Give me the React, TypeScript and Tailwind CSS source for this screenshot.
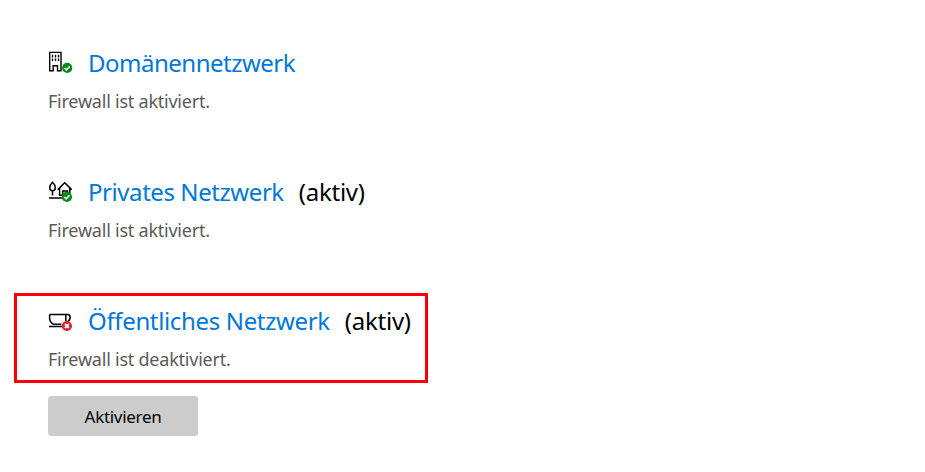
import type { ReactNode } from 'react';

function OkBadge({ x }: { x: number }) {
  return (
    <g transform={`translate(${x} 17.9)`}>
      <circle r="5.1" fill="#078b1c" stroke="none" />
      <path d="M-2.6 0.100l1.800 1.800 3.500-3.600" stroke="#fff" strokeWidth="1.600" />
    </g>
  );
}

function BuildingIcon() {
  return (
    <svg width="26" height="26" viewBox="0 0 26 26" fill="none" stroke="#000" strokeWidth="1.400">
      <path d="M1.700 20.700V2.400h11.300v18.300h-3.500v-5h-4.300v5z" />
      <path d="M4.500 4.800v2.600M7.500 4.800v2.600M10.500 4.800v2.600M4.500 8.500v2.600M7.500 8.500v2.600M10.500 8.500v2.600" />
      <OkBadge x={19.2} />
    </svg>
  );
}

function HomeIcon() {
  return (
    <svg width="26" height="26" viewBox="0 0 26 26" fill="none" stroke="#000" strokeWidth="1.500">
      <path d="M4.500 3.200C2.800 4.800 1.700 6.700 1.700 8.700a2.800 3 0 0 0 5.600 0c0-2-1.100-3.900-2.800-5.500zM4.500 11.700v4.800M1 18.900h14" />
      <path d="M9.700 10.600L16.700 3.800l7 6.800M11.600 9v7.300h3.100v-4.300h4.800v3M21.800 9v6" />
      <OkBadge x={18.9} />
    </svg>
  );
}

function CupIcon() {
  return (
    <svg width="26" height="26" viewBox="0 0 26 26" fill="none" stroke="#000" strokeWidth="1.500">
      <path d="M1.600 6.500h16.200v7M1.600 6.500v3.500c0 3 1.500 5 3.900 6.300h8M1 18.400h13" />
      <path d="M17.800 6.500h2c1.500 0 2.300 1 2.300 2.800 0 1.900-.8 3.300-2.300 3.900" />
      <circle cx="18.900" cy="18" r="5.100" fill="#d9202a" stroke="none" />
      <path d="M16.900 16l4 4M20.900 16l-4 4" stroke="#fff" strokeWidth="1.800" />
    </svg>
  );
}

type NetworkProps = {
  icon: ReactNode;
  name: string;
  nameClass: string;
  active?: boolean;
  status: string;
};

function Network({ icon, name, nameClass, active, status }: NetworkProps) {
  return (
    <section className="flex flex-col gap-[10px]">
      <h2 className="flex h-8 items-center text-[24px] leading-8 whitespace-nowrap">
        <span className="w-10 shrink-0">{icon}</span>
        <a className={`text-[#0078d7] ${nameClass}`}>{name}</a>
        {active && <span className="ml-[15px] tracking-[-0.25px] text-black">(aktiv)</span>}
      </h2>
      <p className="text-[18px] leading-6 tracking-[-0.23px] text-[#5a5a5a]">{status}</p>
    </section>
  );
}

export default function App() {
  return (
    <main className="h-[472px] w-full overflow-hidden bg-white pt-[47px] font-['Noto_Sans',sans-serif]">
      <div className="flex flex-col gap-[63px] pl-12">
        <Network icon={<BuildingIcon />} name="Domänennetzwerk" nameClass="tracking-[-0.5px]" status="Firewall ist aktiviert." />
        <Network icon={<HomeIcon />} name="Privates Netzwerk" nameClass="tracking-[-0.43px]" active status="Firewall ist aktiviert." />
      </div>
      <div className="mt-[51px] ml-[14px] h-[90px] w-[414px] border-3 border-[#fa0000] pt-[9px] pl-[31px]">
        <Network icon={<CupIcon />} name="Öffentliches Netzwerk" nameClass="tracking-[-0.35px]" active status="Firewall ist deaktiviert." />
      </div>
      <button className="mt-[13px] ml-12 h-10 w-[150px] rounded-[3px] bg-[#ccc] pt-px text-[17px] tracking-[-0.3px] text-black">
        Aktivieren
      </button>
    </main>
  );
}
